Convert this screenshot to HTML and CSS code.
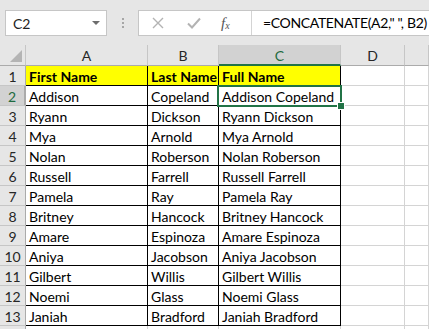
FILE: index.html
```html
<!DOCTYPE html>
<html>
<head>
<meta charset="utf-8">
<link rel="stylesheet" href="styles.css">
</head>
<body>
<div class="app">
  <div class="fbar">
    <div class="namebox">
      <span class="nb-text">C2</span>
      <svg class="nb-arrow" width="8" height="4" viewBox="0 0 8 4"><path d="M0 0H8L4 4Z" fill="#6d6d6d"/></svg>
    </div>
    <div class="grip"><i></i><i></i><i></i></div>
    <div class="fbox">
      <div class="btns">
        <svg class="ico" width="12" height="12" viewBox="0 0 12 12"><path d="M1 1L11 11M11 1L1 11" stroke="#b3b3b3" stroke-width="1.4" fill="none"/></svg>
        <svg class="ico" width="14" height="12" viewBox="0 0 14 12"><path d="M1 6.5L5 10.5L13 1.5" stroke="#b3b3b3" stroke-width="2" fill="none"/></svg>
        <span class="fx">f<sub>x</sub></span>
      </div>
      <div class="formula">=CONCATENATE(A2," ", B2)</div>
    </div>
  </div>
  <div class="sheet">
    <div class="hd corner"><span class="tri"></span></div>
    <div class="hd col">A</div>
    <div class="hd col">B</div>
    <div class="hd col sel-col">C</div>
    <div class="hd col">D</div>
    <div class="hd col"></div>

    <div class="hd row">1</div>
    <div class="c t y b">First Name</div>
    <div class="c t y b">Last Name</div>
    <div class="c t y b">Full Name</div>
    <div class="c"></div><div class="c"></div>

    <div class="hd row sel-row">2</div>
    <div class="c t">Addison</div>
    <div class="c t">Copeland</div>
    <div class="c t active">Addison Copeland</div>
    <div class="c"></div><div class="c"></div>

    <div class="hd row">3</div>
    <div class="c t">Ryann</div><div class="c t">Dickson</div><div class="c t">Ryann Dickson</div>
    <div class="c"></div><div class="c"></div>

    <div class="hd row">4</div>
    <div class="c t">Mya</div><div class="c t">Arnold</div><div class="c t">Mya Arnold</div>
    <div class="c"></div><div class="c"></div>

    <div class="hd row">5</div>
    <div class="c t">Nolan</div><div class="c t">Roberson</div><div class="c t">Nolan Roberson</div>
    <div class="c"></div><div class="c"></div>

    <div class="hd row">6</div>
    <div class="c t">Russell</div><div class="c t">Farrell</div><div class="c t">Russell Farrell</div>
    <div class="c"></div><div class="c"></div>

    <div class="hd row">7</div>
    <div class="c t">Pamela</div><div class="c t">Ray</div><div class="c t">Pamela Ray</div>
    <div class="c"></div><div class="c"></div>

    <div class="hd row">8</div>
    <div class="c t">Britney</div><div class="c t">Hancock</div><div class="c t">Britney Hancock</div>
    <div class="c"></div><div class="c"></div>

    <div class="hd row">9</div>
    <div class="c t">Amare</div><div class="c t">Espinoza</div><div class="c t">Amare Espinoza</div>
    <div class="c"></div><div class="c"></div>

    <div class="hd row">10</div>
    <div class="c t">Aniya</div><div class="c t">Jacobson</div><div class="c t">Aniya Jacobson</div>
    <div class="c"></div><div class="c"></div>

    <div class="hd row">11</div>
    <div class="c t">Gilbert</div><div class="c t">Willis</div><div class="c t">Gilbert Willis</div>
    <div class="c"></div><div class="c"></div>

    <div class="hd row">12</div>
    <div class="c t">Noemi</div><div class="c t">Glass</div><div class="c t">Noemi Glass</div>
    <div class="c"></div><div class="c"></div>

    <div class="hd row">13</div>
    <div class="c t">Janiah</div><div class="c t">Bradford</div><div class="c t">Janiah Bradford</div>
    <div class="c"></div><div class="c"></div>

    <div class="hd row"></div>
    <div class="c"></div><div class="c"></div><div class="c"></div><div class="c"></div><div class="c"></div>
  </div>
</div>
</body>
</html>
```

FILE: styles.css
```css
* { box-sizing: border-box; }
html, body { margin: 0; padding: 0; background: #fff; }
body { font-family: Lato, "Open Sans", sans-serif; color: #000; }
.app { width: 429px; height: 329px; overflow: hidden; }

.fbar {
  height: 45px;
  background: #e6e6e6;
  display: flex;
  align-items: flex-start;
  padding: 10px 0 0 5px;
  white-space: nowrap;
}
.namebox {
  flex: 0 0 102px;
  height: 26px;
  background: #fff;
  border: 1px solid #c6c6c6;
  display: flex;
  align-items: center;
  padding: 0 6px 0 7px;
  justify-content: space-between;
}
.nb-text { font-size: 14px; color: #222; }
.grip {
  flex: 0 0 31px;
  height: 26px;
  display: flex;
  flex-direction: column;
  align-items: center;
  justify-content: center;
  gap: 2px;
}
.grip i { display: block; width: 2px; height: 2px; background: #a6a6a6; }
.fbox {
  flex: 1 1 auto;
  min-width: 0;
  overflow: hidden;
  height: 26px;
  background: #fff;
  border: 1px solid #c6c6c6;
  border-right: none;
  display: flex;
}
.btns {
  flex: 0 0 113px;
  border-right: 1px solid #d4d4d4;
  display: flex;
  align-items: center;
  padding-left: 13px;
}
.btns .ico:first-child { margin-right: 23px; }
.btns .ico:nth-child(2) { margin-right: 20px; }
.fx {
  font-family: "Liberation Serif", serif;
  font-style: italic;
  font-size: 15px;
  color: #555;
  line-height: 1;
}
.fx sub { font-size: 10px; vertical-align: 0; position: relative; top: 1px; }
.formula {
  flex: 0 0 auto;
  padding-left: 11px;
  font-size: 14px;
  letter-spacing: -0.35px;
  line-height: 24px;
  color: #000;
}

.sheet {
  display: grid;
  grid-template-columns: 26px 122px 71px 122px 64px 1fr;
  grid-template-rows: 21px;
  grid-auto-rows: 20px;
}
.hd {
  background: #e6e6e6;
  border-right: 1px solid #c6c6c6;
  border-bottom: 1px solid #ababab;
  font-size: 14px;
  color: #262626;
  text-align: center;
  line-height: 19px;
}
.hd.col { line-height: 21px; }
.hd.row { border-right-color: #ababab; border-bottom-color: #c6c6c6; padding-top: 1px; }
.corner { position: relative; }
.tri {
  position: absolute;
  right: 3px;
  bottom: 3px;
  width: 0; height: 0;
  border-left: 12px solid transparent;
  border-bottom: 12px solid #b4b4b4;
}
.sel-col {
  background: #d2d2d2;
  color: #1e6b40;
  border-bottom: 2px solid #217346;
}
.sel-row {
  background: #d2d2d2;
  color: #1e6b40;
  border-right: 2px solid #217346;
}
.c {
  border-right: 1px solid #d4d4d4;
  border-bottom: 1px solid #d4d4d4;
  font-size: 14px;
  line-height: 19px;
  padding: 1px 0 0 3px;
  white-space: nowrap;
}
.c.t { border-right-color: #000; border-bottom-color: #000; }
.y { background: #ffff00; }
.b { font-weight: 700; }
.active { position: relative; }
.active::before {
  content: "";
  position: absolute;
  left: -2px; top: -1px; right: -2px; bottom: -2px;
  border: 2px solid #217346;
}
.active::after {
  content: "";
  position: absolute;
  right: -4px; bottom: -4px;
  width: 6px; height: 6px;
  background: #217346;
  outline: 1px solid #fff;
}
```
